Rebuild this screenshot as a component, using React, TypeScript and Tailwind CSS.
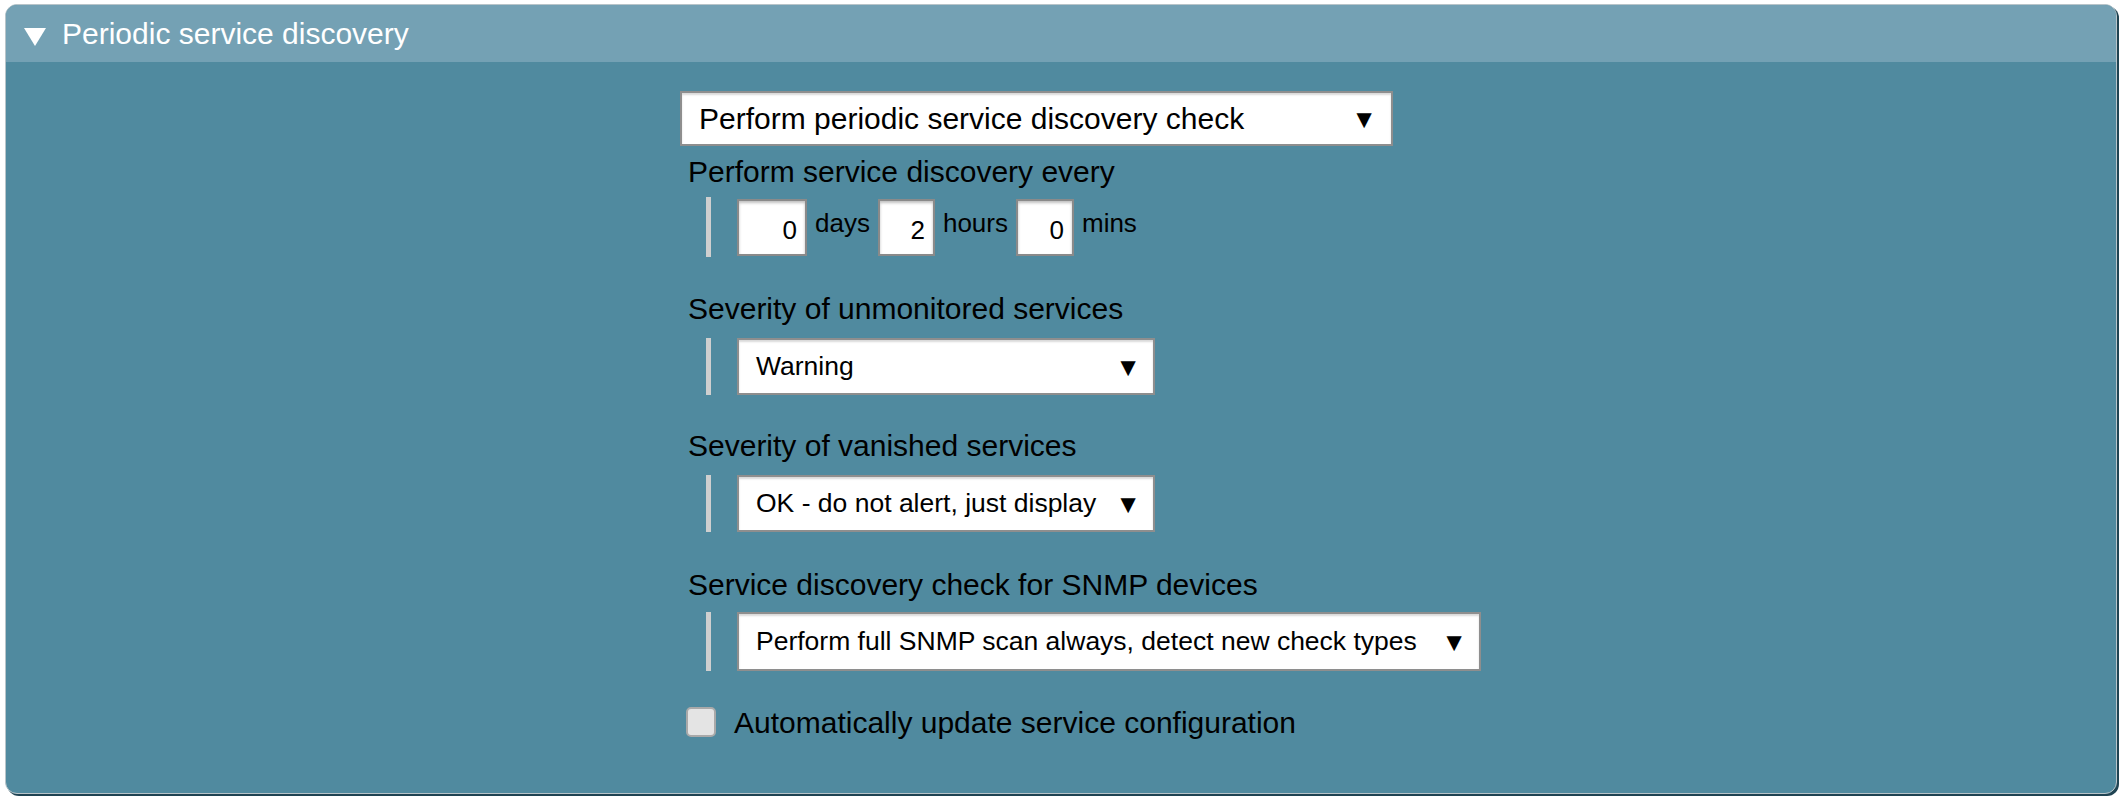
import React from 'react';

const font = { fontFamily: '"Liberation Sans", Arial, sans-serif' };

function Arrow() {
  return <span className="text-[26px] leading-none text-black">▼</span>;
}

function Select({ value, width, height }: { value: string; width: string; height: string }) {
  return (
    <div
      className={`${width} ${height} flex items-center justify-between bg-white border-2 border-[#8e8e8e] shadow-[inset_0_2px_2px_rgba(0,0,0,0.15)] pl-[17px] pr-[12px] text-[26.5px] text-black`}
    >
      <span>{value}</span>
      <Arrow />
    </div>
  );
}

function NumInput({ value, width }: { value: string; width: string }) {
  return (
    <div
      className={`${width} h-[57px] bg-white border-2 border-[#8a8a8a] shadow-[inset_0_2px_3px_rgba(0,0,0,0.25)] flex items-center justify-end pr-[8px] pt-[6px] text-[26px] text-black`}
    >
      {value}
    </div>
  );
}

function Indented({ children, height }: { children: React.ReactNode; height: string }) {
  return (
    <div className={`flex items-stretch ${height}`}>
      <div className="ml-[18px] w-[5px] bg-[#cfcfcf]" />
      <div className="ml-[26px] flex items-center gap-[8px]">{children}</div>
    </div>
  );
}

export default function App() {
  return (
    <div className="w-[2123px] h-[802px] bg-white pt-[4px] pl-[5px]" style={font}>
      <div className="w-[2112px] h-[790px] rounded-[12px] border border-[#b8c4c9] bg-[#508a9f] shadow-[2px_2px_0_#1f4352] overflow-hidden flex flex-col">
        <div className="h-[57px] bg-[#74a1b4] flex items-center pl-[18px] shrink-0">
          <svg width="22" height="18" viewBox="0 0 22 18" className="mt-[6px]">
            <polygon points="0,0 22,0 11,18" fill="#ffffff" />
          </svg>
          <span className="ml-[16px] text-[30px] text-white">Periodic service discovery</span>
        </div>

        <div className="pl-[674px] pt-[29px] flex flex-col">
          <div className="w-[713px] h-[55px] flex items-center justify-between bg-white border-2 border-[#8e8e8e] shadow-[inset_0_2px_2px_rgba(0,0,0,0.15)] pl-[17px] pr-[14px] text-[30px] text-black">
            <span>Perform periodic service discovery check</span>
            <Arrow />
          </div>

          <div className="ml-[8px] mt-[9px] h-[34px] leading-[34px] text-[30px] text-black">
            Perform service discovery every
          </div>
          <div className="ml-[8px] mt-[8px]">
            <Indented height="h-[60px]">
              <NumInput value="0" width="w-[70px]" />
              <span className="text-[26px] text-black -mt-[8px]">days</span>
              <NumInput value="2" width="w-[57px]" />
              <span className="text-[26px] text-black -mt-[8px]">hours</span>
              <NumInput value="0" width="w-[58px]" />
              <span className="text-[26px] text-black -mt-[8px]">mins</span>
            </Indented>
          </div>

          <div className="ml-[8px] mt-[35px] h-[34px] leading-[34px] text-[30px] text-black">
            Severity of unmonitored services
          </div>
          <div className="ml-[8px] mt-[12px]">
            <Indented height="h-[57px]">
              <Select value="Warning" width="w-[418px]" height="h-[57px]" />
            </Indented>
          </div>

          <div className="ml-[8px] mt-[34px] h-[34px] leading-[34px] text-[30px] text-black">
            Severity of vanished services
          </div>
          <div className="ml-[8px] mt-[12px]">
            <Indented height="h-[57px]">
              <Select value="OK - do not alert, just display" width="w-[418px]" height="h-[57px]" />
            </Indented>
          </div>

          <div className="ml-[8px] mt-[36px] h-[34px] leading-[34px] text-[30px] text-black">
            Service discovery check for SNMP devices
          </div>
          <div className="ml-[8px] mt-[10px]">
            <Indented height="h-[59px]">
              <Select
                value="Perform full SNMP scan always, detect new check types"
                width="w-[744px]"
                height="h-[59px]"
              />
            </Indented>
          </div>

          <div className="ml-[6px] mt-[34px] flex items-center h-[34px]">
            <div className="w-[30px] h-[30px] rounded-[5px] bg-[#e4e4e4] border-2 border-[#a9a9a9]" />
            <span className="ml-[18px] text-[30px] text-black">Automatically update service configuration</span>
          </div>
        </div>
      </div>
    </div>
  );
}
